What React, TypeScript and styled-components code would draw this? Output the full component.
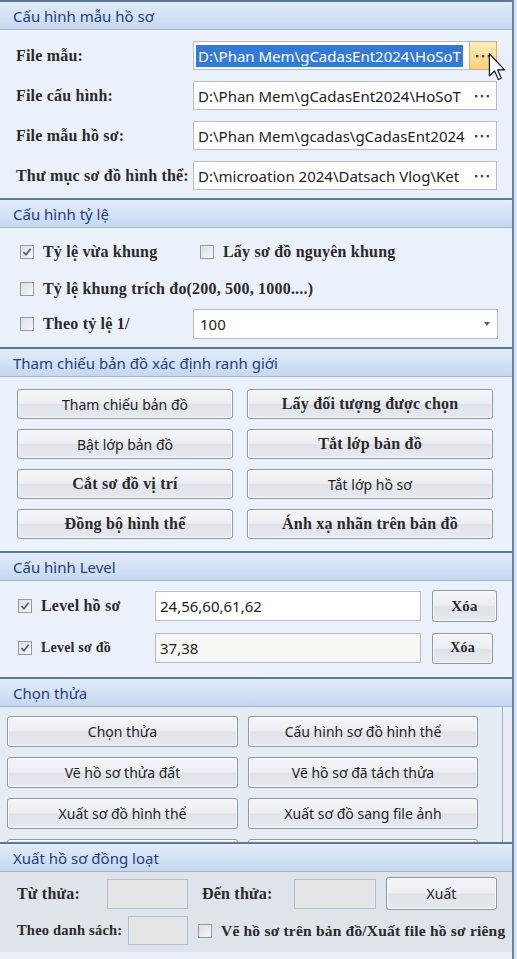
import React from "react";
import styled, { createGlobalStyle } from "styled-components";

const SANS = `"Noto Sans", "Open Sans", sans-serif`;
const SERIF = `"Liberation Serif", "DejaVu Serif", serif`;

const GlobalStyle = createGlobalStyle`
  html, body { margin: 0; padding: 0; background: #d8e3f0; }
  body { width: 517px; height: 959px; overflow: hidden; }
  * { box-sizing: border-box; }
`;

const Panel = styled.div`
  width: 514px;
  height: 959px;
  border-right: 2px solid #6c82a2;
  display: flex;
  flex-direction: column;
  background: #e9f0f9;
  overflow: hidden;
`;

const Section = styled.section<{ $bg?: string }>`
  border-top: 2px solid #5e7698;
  background: ${(p) => p.$bg ?? "#eaf1fa"};
  display: flex;
  flex-direction: column;
  flex: 0 0 auto;
`;

const Header = styled.div`
  height: 28px;
  display: flex;
  align-items: center;
  padding-left: 13px;
  background: linear-gradient(#e2ecf9, #d2e1f4 55%, #c5d8ef);
  border-bottom: 1px solid #a2b6d1;
  color: #24407c;
  font-family: ${SANS};
  font-size: 15px;
`;

const Label = styled.span<{ $size?: number; $w?: number }>`
  font-family: ${SERIF};
  font-weight: bold;
  font-size: ${(p) => p.$size ?? 16}px;
  letter-spacing: 0.2px;
  color: #2a2a2a;
  white-space: nowrap;
  ${(p) => (p.$w ? `width: ${p.$w}px; flex: 0 0 ${p.$w}px;` : "")}
`;

/* ---------- Section 1 ---------- */
const FileGrid = styled.div`
  display: grid;
  grid-template-columns: 177px 304px;
  grid-auto-rows: 29px;
  row-gap: 11px;
  padding: 11px 0 8px 16px;
  align-items: center;
`;

const PathField = styled.div`
  height: 29px;
  display: flex;
  align-items: stretch;
  background: #ffffff;
  border: 1px solid #b3bfcf;
`;

const PathText = styled.div`
  flex: 1 1 auto;
  overflow: hidden;
  white-space: nowrap;
  display: flex;
  align-items: center;
  padding-left: 2px;
  font-family: ${SANS};
  font-size: 15px;
  color: #222;
`;

const PathValue = styled.span<{ $selected?: boolean }>`
  padding: 1px 2px;
  background: ${(p) => (p.$selected ? "#3479d8" : "transparent")};
  color: ${(p) => (p.$selected ? "#ffffff" : "#222")};
`;

const Browse = styled.div<{ $hover?: boolean }>`
  position: relative;
  flex: 0 0 28px;
  display: flex;
  align-items: center;
  justify-content: center;
  background: ${(p) => (p.$hover ? "linear-gradient(#fdeebb, #f8d27c)" : "transparent")};
  border: ${(p) => (p.$hover ? "1px solid #e2ae4f" : "1px solid transparent")};
  margin: ${(p) => (p.$hover ? "-1px -1px -1px 0" : "0")};
`;

const Cursor = styled.svg`
  position: absolute;
  left: 18px;
  top: 11px;
  width: 19px;
  height: 28px;
  z-index: 2;
`;

const Dots = () => (
  <svg width="16" height="4" viewBox="0 0 16 4">
    <rect x="1" y="1" width="2.4" height="2.4" fill="#4a4a4a" />
    <rect x="6.8" y="1" width="2.4" height="2.4" fill="#4a4a4a" />
    <rect x="12.6" y="1" width="2.4" height="2.4" fill="#4a4a4a" />
  </svg>
);

/* ---------- Checkbox ---------- */
const Box = styled.span`
  width: 14px;
  height: 14px;
  flex: 0 0 14px;
  border: 1px solid #959aa0;
  background: linear-gradient(135deg, #dcdee1, #f8f8f8);
  display: inline-flex;
  align-items: center;
  justify-content: center;
`;

const CheckBox = ({ checked }: { checked?: boolean }) => (
  <Box>
    {checked && (
      <svg width="10" height="10" viewBox="0 0 10 10">
        <path d="M1.5 5.2 L4 7.8 L8.6 1.8" fill="none" stroke="#4b5f86" strokeWidth="1.7" />
      </svg>
    )}
  </Box>
);

const CheckItem = styled.div<{ $w?: number }>`
  display: flex;
  align-items: center;
  gap: 9px;
  ${(p) => (p.$w ? `width: ${p.$w}px; flex: 0 0 ${p.$w}px;` : "")}
`;

/* ---------- Section 2 ---------- */
const ScaleBody = styled.div`
  display: flex;
  flex-direction: column;
  padding: 6px 0 7px 20px;
`;

const Row = styled.div<{ $h: number }>`
  height: ${(p) => p.$h}px;
  display: flex;
  align-items: center;
`;

const Select = styled.div`
  width: 305px;
  height: 30px;
  display: flex;
  align-items: center;
  justify-content: space-between;
  padding: 0 7px 0 6px;
  background: #fff;
  border: 1px solid #b3bfcf;
  font-family: ${SANS};
  font-size: 15px;
  color: #222;
`;

const Caret = styled.span`
  width: 0;
  height: 0;
  border-left: 3px solid transparent;
  border-right: 3px solid transparent;
  border-top: 4px solid #5a5a5a;
`;

/* ---------- Buttons ---------- */
const ButtonGrid = styled.div<{ $cols: string; $pad: string; $gap: number; $rowH: number }>`
  display: grid;
  grid-template-columns: ${(p) => p.$cols};
  grid-auto-rows: ${(p) => p.$rowH}px;
  column-gap: ${(p) => p.$gap}px;
  row-gap: 10px;
  padding: ${(p) => p.$pad};
`;

const Button = styled.div<{ $serif?: boolean; $size?: number; $w?: number; $h?: number }>`
  display: flex;
  align-items: center;
  justify-content: center;
  ${(p) => (p.$w ? `width: ${p.$w}px; flex: 0 0 ${p.$w}px;` : "")}
  ${(p) => (p.$h ? `height: ${p.$h}px;` : "")}
  border: 1px solid #8c97a7;
  border-radius: 3px;
  background: linear-gradient(#f5f6f8, #eceef2 48%, #dfe3e9 52%, #e6e9ee);
  box-shadow: inset 0 0 0 1px rgba(255, 255, 255, 0.7);
  font-family: ${(p) => (p.$serif ? SERIF : SANS)};
  font-weight: ${(p) => (p.$serif ? "bold" : "normal")};
  font-size: ${(p) => p.$size ?? (p.$serif ? 16 : 14)}px;
  letter-spacing: ${(p) => (p.$serif ? "0.2px" : "0")};
  color: ${(p) => (p.$serif ? "#2a2a2a" : "#1f1f1f")};
  white-space: nowrap;
`;

/* ---------- Section 4 ---------- */
const LevelBody = styled.div`
  display: grid;
  grid-template-columns: 126px 266px 65px;
  grid-auto-rows: 42px;
  column-gap: 11px;
  padding: 4px 0 8px 18px;
  align-items: center;
`;

const TextBox = styled.div<{ $bg?: string; $w?: number; $h?: number }>`
  height: ${(p) => p.$h ?? 30}px;
  ${(p) => (p.$w ? `width: ${p.$w}px; flex: 0 0 ${p.$w}px;` : "")}
  display: flex;
  align-items: center;
  padding-left: 4px;
  background: ${(p) => p.$bg ?? "#ffffff"};
  border: 1px solid #b3bfcf;
  font-family: ${SANS};
  font-size: 15px;
  color: #222;
`;

/* ---------- Section 5 ---------- */
const ScrollArea = styled.div`
  width: 503px;
  height: 135px;
  overflow: hidden;
  border-right: 1px solid #a7b5c8;
  background: #e6ecf4;
`;

/* ---------- Section 6 ---------- */
const BatchBody = styled.div`
  display: flex;
  flex-direction: column;
  gap: 6px;
  padding: 5px 0 7px 17px;
`;

const Spacer = styled.span<{ $w: number }>`
  flex: 0 0 ${(p) => p.$w}px;
`;

const files = [
  { label: "File mẫu:", value: "D:\\Phan Mem\\gCadasEnt2024\\HoSoT", selected: true },
  { label: "File cấu hình:", value: "D:\\Phan Mem\\gCadasEnt2024\\HoSoT" },
  { label: "File mẫu hồ sơ:", value: "D:\\Phan Mem\\gcadas\\gCadasEnt2024" },
  { label: "Thư mục sơ đồ hình thể:", value: "D:\\microation 2024\\Datsach Vlog\\Ket" },
];

const refButtons: { t: string; serif?: boolean }[] = [
  { t: "Tham chiếu bản đồ" },
  { t: "Lấy đối tượng được chọn", serif: true },
  { t: "Bật lớp bản đồ" },
  { t: "Tắt lớp bản đồ", serif: true },
  { t: "Cắt sơ đồ vị trí", serif: true },
  { t: "Tắt lớp hồ sơ" },
  { t: "Đồng bộ hình thể", serif: true },
  { t: "Ánh xạ nhãn trên bản đồ", serif: true },
];

const parcelButtons = [
  "Chọn thửa",
  "Cấu hình sơ đồ hình thể",
  "Vẽ hồ sơ thửa đất",
  "Vẽ hồ sơ đã tách thửa",
  "Xuất sơ đồ hình thể",
  "Xuất sơ đồ sang file ảnh",
  "",
  "",
];

export default function App() {
  return (
    <>
      <GlobalStyle />
      <Panel>
        <Section>
          <Header>Cấu hình mẫu hồ sơ</Header>
          <FileGrid>
            {files.map((f) => (
              <React.Fragment key={f.label}>
                <Label>{f.label}</Label>
                <PathField>
                  <PathText>
                    <PathValue $selected={f.selected}>{f.value}</PathValue>
                  </PathText>
                  <Browse $hover={f.selected}>
                    <Dots />
                    {f.selected && (
                      <Cursor viewBox="0 0 12 19">
                        <path
                          d="M0.5 0.5 L0.5 15.5 L4 12.2 L6.6 18 L8.6 17.1 L6.1 11.5 L10.8 11.5 Z"
                          fill="#ffffff"
                          stroke="#111"
                          strokeWidth="0.8"
                          strokeLinejoin="round"
                        />
                      </Cursor>
                    )}
                  </Browse>
                </PathField>
              </React.Fragment>
            ))}
          </FileGrid>
        </Section>

        <Section>
          <Header>Cấu hình tỷ lệ</Header>
          <ScaleBody>
            <Row $h={36}>
              <CheckItem $w={180}>
                <CheckBox checked />
                <Label>Tỷ lệ vừa khung</Label>
              </CheckItem>
              <CheckItem>
                <CheckBox />
                <Label>Lấy sơ đồ nguyên khung</Label>
              </CheckItem>
            </Row>
            <Row $h={38}>
              <CheckItem>
                <CheckBox />
                <Label>Tỷ lệ khung trích đo(200, 500, 1000....)</Label>
              </CheckItem>
            </Row>
            <Row $h={32}>
              <CheckItem $w={173}>
                <CheckBox />
                <Label>Theo tỷ lệ 1/</Label>
              </CheckItem>
              <Select>
                <span>100</span>
                <Caret />
              </Select>
            </Row>
          </ScaleBody>
        </Section>

        <Section>
          <Header>Tham chiếu bản đồ xác định ranh giới</Header>
          <ButtonGrid $cols="216px 246px" $pad="12px 0 12px 17px" $gap={14} $rowH={30}>
            {refButtons.map((b) => (
              <Button key={b.t} $serif={b.serif}>
                {b.t}
              </Button>
            ))}
          </ButtonGrid>
        </Section>

        <Section>
          <Header>Cấu hình Level</Header>
          <LevelBody>
            <CheckItem>
              <CheckBox checked />
              <Label>Level hồ sơ</Label>
            </CheckItem>
            <TextBox $h={30}>24,56,60,61,62</TextBox>
            <Button $serif $size={15} $h={32}>
              Xóa
            </Button>
            <CheckItem>
              <CheckBox checked />
              <Label $size={14}>Level sơ đồ</Label>
            </CheckItem>
            <TextBox $h={30} $bg="#f7f7f4">
              37,38
            </TextBox>
            <Button $serif $size={14} $w={61} $h={31}>
              Xóa
            </Button>
          </LevelBody>
        </Section>

        <Section $bg="#e8edf4">
          <Header>Chọn thửa</Header>
          <ScrollArea>
            <ButtonGrid $cols="231px 230px" $pad="9px 0 0 7px" $gap={10} $rowH={31}>
              {parcelButtons.map((t, i) => (
                <Button key={i}>{t}</Button>
              ))}
            </ButtonGrid>
          </ScrollArea>
        </Section>

        <Section $bg="#dfe4eb">
          <Header>Xuất hồ sơ đồng loạt</Header>
          <BatchBody>
            <Row $h={33}>
              <Label $w={90}>Từ thửa:</Label>
              <TextBox $w={81} $bg="#e4e5e7" />
              <Spacer $w={14} />
              <Label $w={92}>Đến thửa:</Label>
              <TextBox $w={82} $bg="#e4e5e7" />
              <Spacer $w={10} />
              <Button $w={111} $h={33}>
                Xuất
              </Button>
            </Row>
            <Row $h={29}>
              <Label $w={111} $size={14.5}>
                Theo danh sách:
              </Label>
              <TextBox $w={60} $h={29} $bg="#e4e5e7" />
              <Spacer $w={10} />
              <CheckItem>
                <CheckBox />
                <Label $size={15.5}>Vẽ hồ sơ trên bản đồ/Xuất file hồ sơ riêng</Label>
              </CheckItem>
            </Row>
          </BatchBody>
        </Section>
      </Panel>
    </>
  );
}
